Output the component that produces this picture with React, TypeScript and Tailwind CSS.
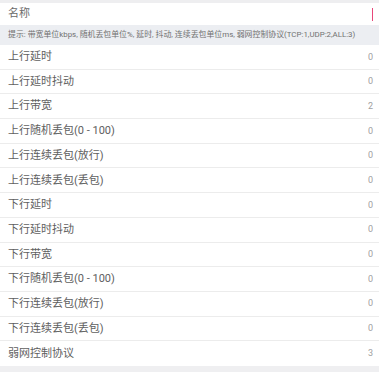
import React from "react";

const rows: [string, string][] = [
  ["上行延时", "0"],
  ["上行延时抖动", "0"],
  ["上行带宽", "2"],
  ["上行随机丢包(0 - 100)", "0"],
  ["上行连续丢包(放行)", "0"],
  ["上行连续丢包(丢包)", "0"],
  ["下行延时", "0"],
  ["下行延时抖动", "0"],
  ["下行带宽", "0"],
  ["下行随机丢包(0 - 100)", "0"],
  ["下行连续丢包(放行)", "0"],
  ["下行连续丢包(丢包)", "0"],
  ["弱网控制协议", "3"],
];

export default function App() {
  return (
    <div
      className="w-[379px] h-[372px] overflow-hidden bg-[#efeff1] flex flex-col"
      style={{ fontFamily: '"Roboto", "Noto Sans CJK SC", sans-serif' }}
    >
      <div className="h-[3px] bg-[#eeeef0]" />
      <div className="h-[22px] bg-white flex items-center justify-between pl-[8px] pr-[6px]">
        <span className="text-[11px] text-[#6a6a6a]">名称</span>
        <span className="w-[1.5px] h-[13px] bg-[#e8477a]" />
      </div>
      <div className="h-[20px] bg-[#eceef2] flex items-center pl-[8px]">
        <span className="text-[7.9px] text-[#707070] whitespace-nowrap">
          提示: 带宽单位kbps, 随机丢包单位%, 延时, 抖动, 连续丢包单位ms, 弱网控制协议(TCP:1,UDP:2,ALL:3)
        </span>
      </div>
      <div className="bg-white flex flex-col">
        {rows.map(([label, value], i) => (
          <div
            key={i}
            className={`h-[24.7px] flex items-center justify-between pl-[8px] pr-[6px] pt-[1px] ${
              i < rows.length - 1 ? "border-b border-[#ececec]" : ""
            }`}
          >
            <span className="text-[11px] text-[#606060]">{label}</span>
            <span className="text-[9px] text-[#a0a0a0]">{value}</span>
          </div>
        ))}
      </div>
    </div>
  );
}
